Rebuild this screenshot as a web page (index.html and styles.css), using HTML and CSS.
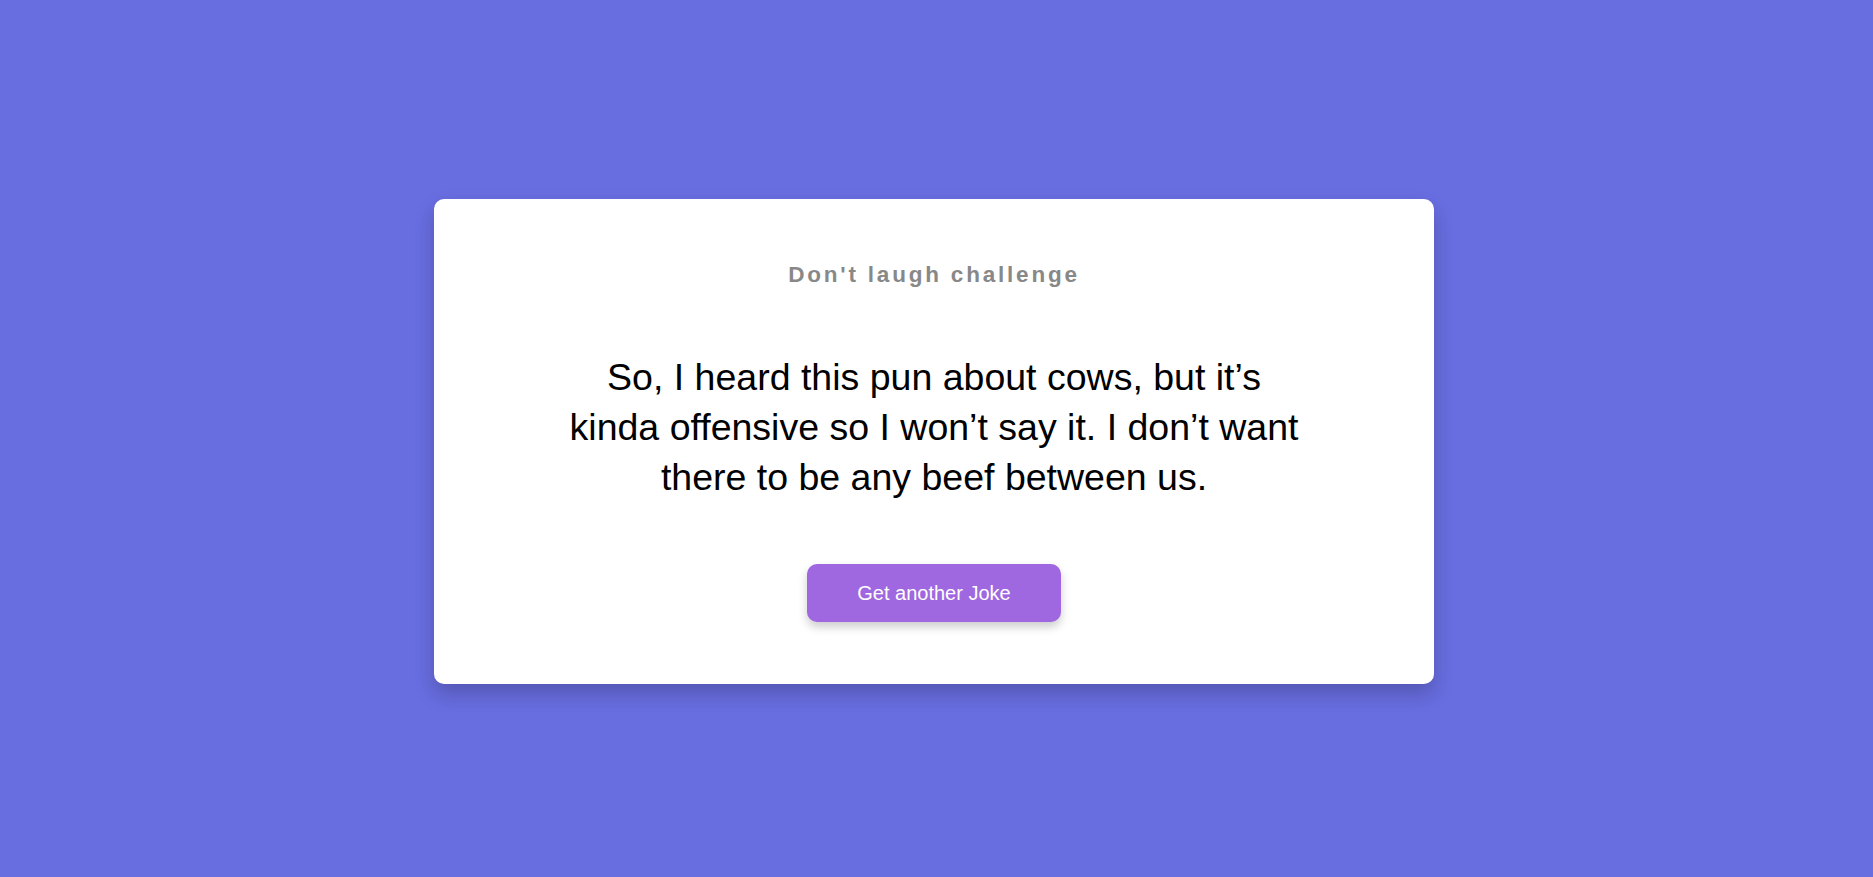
FILE: index.html
```html
<!DOCTYPE html>
<html lang="en">
<head>
<meta charset="utf-8">
<title>Don't laugh challenge</title>
<link rel="stylesheet" href="styles.css">
</head>
<body>
  <main class="page">
    <section class="card">
      <h3 class="title">Don't laugh challenge</h3>
      <p class="joke">So, I heard this pun about cows, but it’s kinda offensive so I won’t say it. I don’t want there to be any beef between us.</p>
      <button class="btn" type="button">Get another Joke</button>
    </section>
  </main>
</body>
</html>
```

FILE: styles.css
```css
* {
  box-sizing: border-box;
}

html, body {
  margin: 0;
  padding: 0;
}

body {
  background: #686de0;
  font-family: "Liberation Sans", Arial, sans-serif;
}

.page {
  height: 100vh;
  padding: 6px 5px 0 0;
  display: flex;
  align-items: center;
  justify-content: center;
}

.card {
  width: 1000px;
  background: #ffffff;
  border-radius: 10px;
  box-shadow: 0 10px 20px rgba(0, 0, 0, 0.2);
  padding: 63px 0 62px;
  display: flex;
  flex-direction: column;
  align-items: center;
  text-align: center;
}

.title {
  margin: 0;
  font-size: 22.5px;
  font-weight: bold;
  letter-spacing: 2.8px;
  color: #888888;
  line-height: normal;
}

.joke {
  margin: 64px 0 62px;
  max-width: 745px;
  font-size: 37.5px;
  line-height: 50px;
  color: #000000;
}

.btn {
  font-family: "Liberation Sans", Arial, sans-serif;
  font-size: 20px;
  line-height: 23px;
  padding: 17.5px 50px;
  background: #9f68e0;
  color: #ffffff;
  border: none;
  border-radius: 10px;
  box-shadow: 0 5px 10px rgba(0, 0, 0, 0.2);
  cursor: pointer;
}
```
